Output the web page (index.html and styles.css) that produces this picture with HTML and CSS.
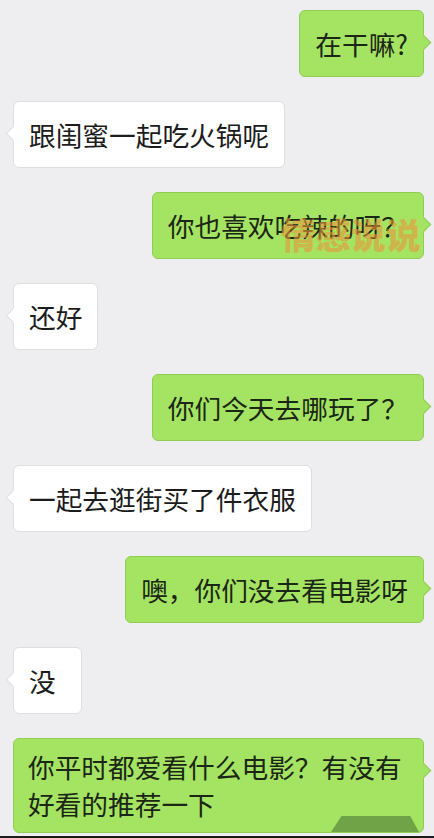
FILE: index.html
```html
<!DOCTYPE html>
<html lang="zh-CN">
<head>
<meta charset="utf-8">
<title>聊天记录</title>
<link rel="stylesheet" href="styles.css">
</head>
<body>
<div class="chat">
  <div class="row row-me"><div class="bubble bubble-me">在干嘛?</div></div>
  <div class="row row-other"><div class="bubble bubble-other">跟闺蜜一起吃火锅呢</div></div>
  <div class="row row-me"><div class="bubble bubble-me">你也喜欢吃辣的呀？<span class="watermark">情感说说</span></div></div>
  <div class="row row-other"><div class="bubble bubble-other">还好</div></div>
  <div class="row row-me"><div class="bubble bubble-me">你们今天去哪玩了？</div></div>
  <div class="row row-other"><div class="bubble bubble-other">一起去逛街买了件衣服</div></div>
  <div class="row row-me"><div class="bubble bubble-me">噢，你们没去看电影呀</div></div>
  <div class="row row-other"><div class="bubble bubble-other">没</div></div>
  <div class="row row-me"><div class="bubble bubble-me bubble-multi">你平时都爱看什么电影？有没有好看的推荐一下<span class="smudge"></span></div></div>
</div>
<div class="bottom-line"></div>
</body>
</html>
```

FILE: styles.css
```css
html, body {
  margin: 0;
  padding: 0;
}
body {
  width: 434px;
  height: 838px;
  overflow: hidden;
  background: #eeedef;
  font-family: "Noto Sans CJK SC", "Noto Sans", sans-serif;
  position: relative;
}
.chat {
  display: flex;
  flex-direction: column;
  gap: 24px;
  padding: 10px 10px 0 13px;
}
.row {
  display: flex;
}
.row-me {
  justify-content: flex-end;
}
.row-other {
  justify-content: flex-start;
}
.bubble {
  position: relative;
  box-sizing: border-box;
  max-width: 411px;
  min-width: 69px;
  padding: 14px 15px;
  font-size: 26.7px;
  line-height: 37px;
  color: #1c1c1c;
  border-radius: 6px;
  border: 1px solid;
}
.bubble::after {
  content: "";
  position: absolute;
  top: 26px;
  width: 9px;
  height: 9px;
  transform: rotate(45deg);
  border: 1px solid;
}
.bubble-me {
  background: #a4e462;
  border-color: #8fcd54;
  color: #1b2614;
}
.bubble-me::after {
  right: -6px;
  background: #a4e462;
  border-color: #8fcd54 #8fcd54 transparent transparent;
}
.bubble-other {
  background: #ffffff;
  border-color: #dededf;
}
.bubble-other::after {
  left: -6px;
  background: #ffffff;
  border-color: transparent transparent #dededf #dededf;
}
.bubble-multi {
  width: 411px;
  padding: 9px 15px 10px 14px;
}
.watermark {
  position: absolute;
  left: 128px;
  top: 21px;
  font-size: 35px;
  line-height: 40px;
  font-weight: 900;
  color: rgba(236, 150, 60, 0.6);
  white-space: nowrap;
  pointer-events: none;
}
.smudge {
  position: absolute;
  right: 4px;
  bottom: 0;
  width: 88px;
  height: 16px;
  background: rgba(70, 110, 50, 0.55);
  clip-path: polygon(12% 0, 90% 0, 100% 100%, 0 100%);
}
.bottom-line {
  position: absolute;
  left: 0;
  right: 0;
  bottom: 0;
  height: 2px;
  background: #1a1a1a;
}
```
